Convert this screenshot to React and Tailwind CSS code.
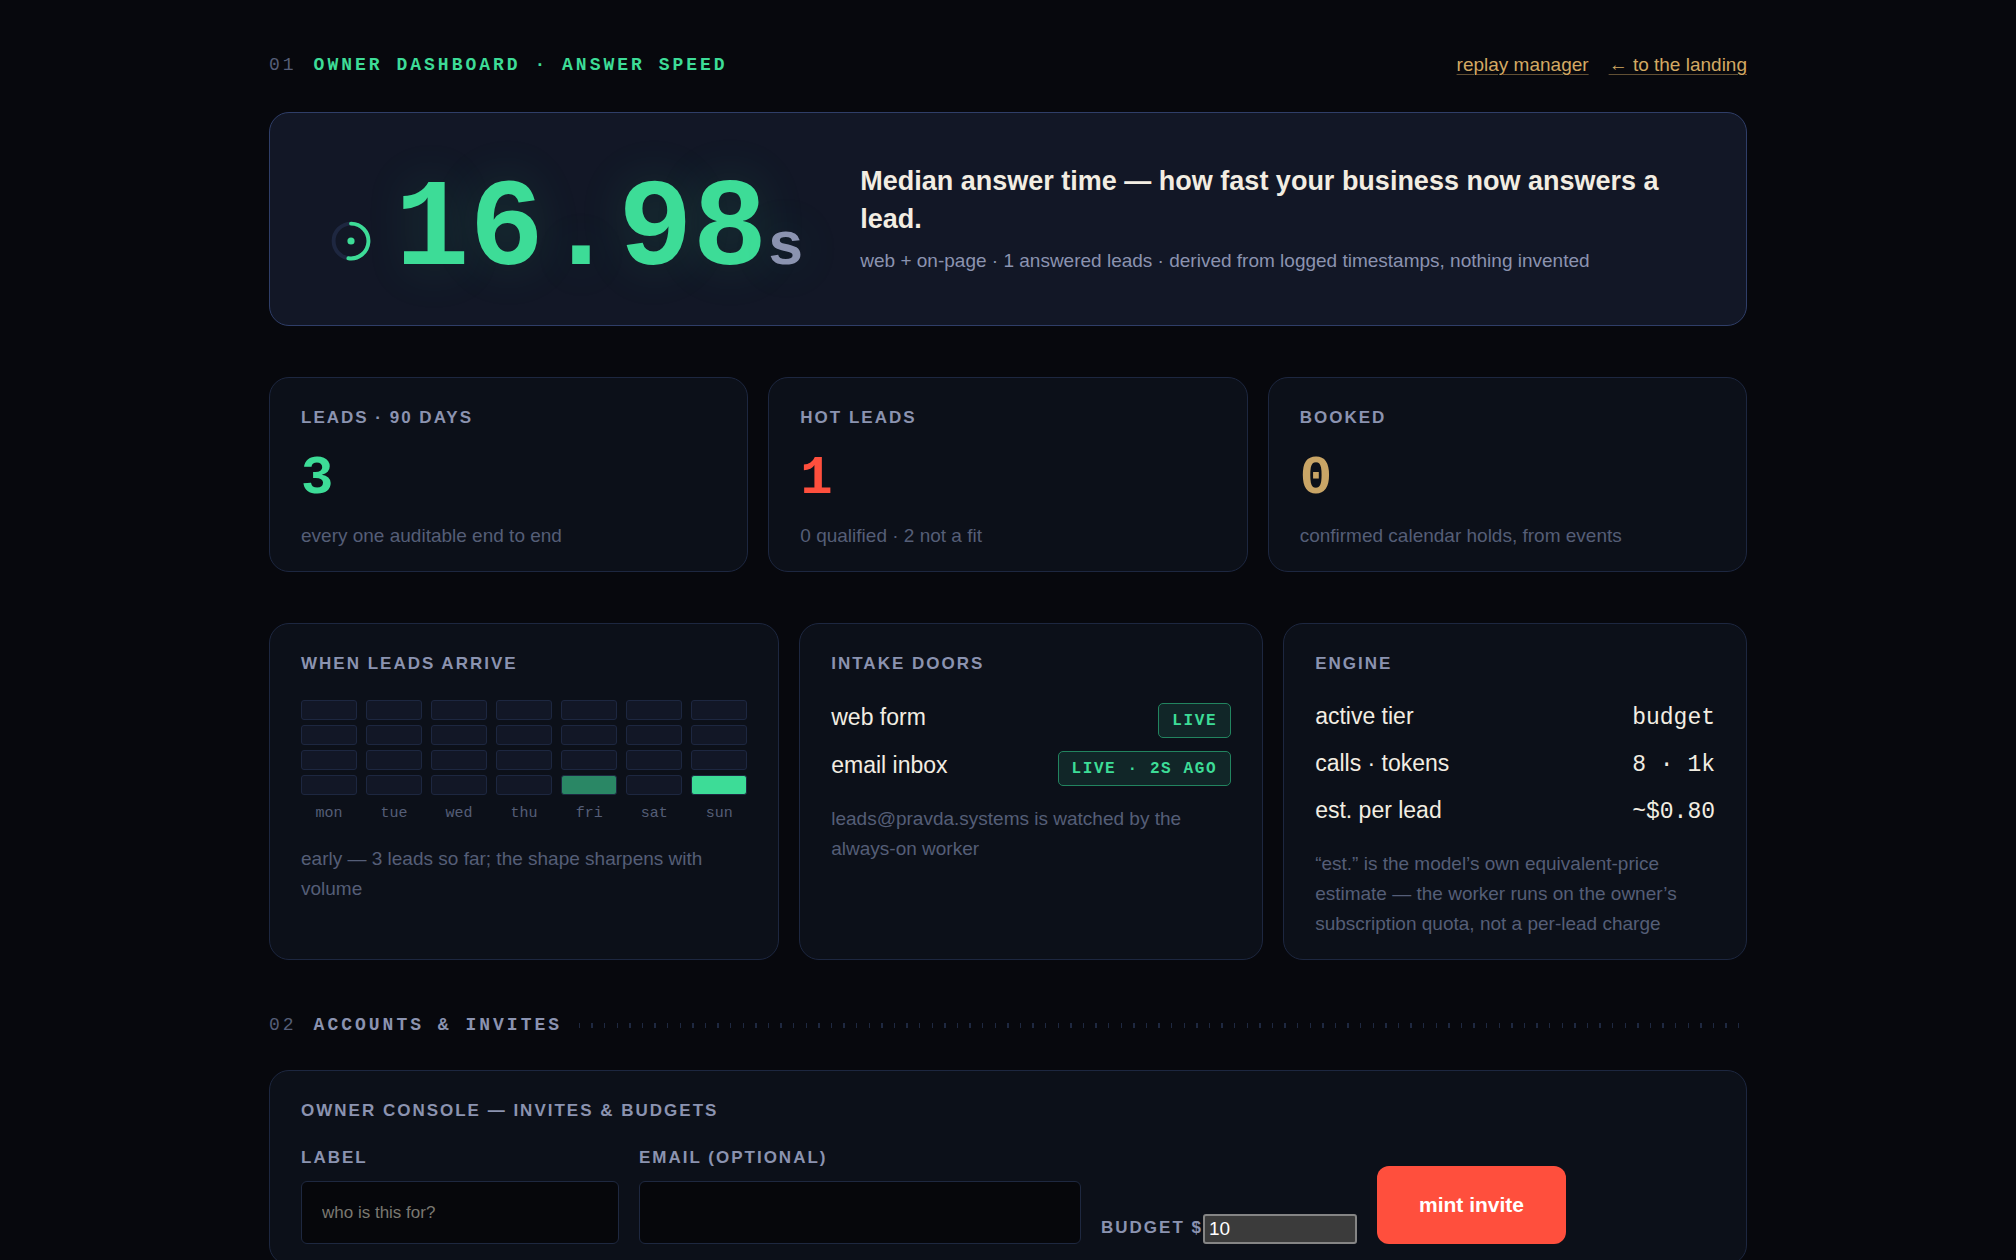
import { useState } from "react";

const days = ["mon", "tue", "wed", "thu", "fri", "sat", "sun"];

// 4 time slots x 7 days, 0 = no leads
const arrivals = [
  [0, 0, 0, 0, 0, 0, 0],
  [0, 0, 0, 0, 0, 0, 0],
  [0, 0, 0, 0, 0, 0, 0],
  [0, 0, 0, 0, 1, 0, 2],
];

const heat = ["bg-[#121726]", "bg-[#2a8765]", "bg-[#3ddc97]"];

const stats = [
  {
    label: "Leads · 90 days",
    value: "3",
    note: "every one auditable end to end",
    color: "text-[#3ddc97]",
  },
  {
    label: "Hot leads",
    value: "1",
    note: "0 qualified · 2 not a fit",
    color: "text-[#ff4f3d]",
  },
  {
    label: "Booked",
    value: "0",
    note: "confirmed calendar holds, from events",
    color: "text-[#c9a566]",
  },
];

const doors = [
  { name: "web form", status: "live" },
  { name: "email inbox", status: "live · 2s ago" },
];

const engine = [
  { name: "active tier", value: "budget" },
  { name: "calls · tokens", value: "8 · 1k" },
  { name: "est. per lead", value: "~$0.80" },
];

const mono = "font-['Liberation_Mono',monospace]";

const labelText =
  "text-[17px] leading-8 font-bold uppercase tracking-[2px] text-[#8b93b0]";

const fieldInput =
  "h-[63px] w-full rounded-[6px] border border-[#1e2840] bg-[#06070b] px-5 text-[17px] text-[#f2ede2] placeholder:text-[#7a7871] outline-none focus:border-[#2f3e68]";

function Card({ title, children }) {
  return (
    <section className="rounded-[20px] border border-[#1d2740] bg-[#0c1019] px-[31px] pt-6 pb-5">
      <h3 className={labelText}>{title}</h3>
      {children}
    </section>
  );
}

function Note({ children }) {
  return (
    <p className="mt-[15px] text-[19px] leading-[30px] text-[#555e77]">
      {children}
    </p>
  );
}

function Dial() {
  return (
    <svg
      className="size-10 shrink-0"
      viewBox="0 0 40 40"
      fill="none"
      aria-hidden="true"
    >
      <circle cx="20" cy="20" r="17.4" stroke="#1e2740" strokeWidth="3.9" />
      <path
        d="M20 2.6A17.4 17.4 0 1 1 17.4 37.2"
        stroke="#3ddc97"
        strokeWidth="3.9"
        strokeLinecap="round"
      />
      <circle cx="20" cy="20" r="3.6" fill="#3ddc97" />
    </svg>
  );
}

function App() {
  const [label, setLabel] = useState("");
  const [email, setEmail] = useState("");
  const [budget, setBudget] = useState("10");

  return (
    <div className="min-h-screen bg-[#07080d] px-6 pt-[50px] pb-16 font-['Liberation_Sans',Arial,sans-serif] text-[23px] text-[#f2ede2]">
      <main className="mx-auto w-full max-w-[1478px]">
        {/* HEADER */}
        <header className="flex items-center justify-between">
          <h1
            className={`${mono} flex gap-[17px] text-[18px] leading-[30px] font-bold uppercase tracking-[3px] text-[#3ddc97]`}
          >
            <span className="font-normal text-[#555e77]">01</span>
            Owner dashboard · answer speed
          </h1>
          <nav className="flex gap-5 text-[19px] leading-[30px] text-[#d3a963]">
            <a
              href="#replay"
              className="underline decoration-[#d3a963]/45 decoration-1 underline-offset-3"
            >
              replay manager
            </a>
            <a
              href="#landing"
              className="underline decoration-[#d3a963]/45 decoration-1 underline-offset-3"
            >
              ← to the landing
            </a>
          </nav>
        </header>

        {/* HERO */}
        <section className="mt-8 flex items-center gap-14 rounded-[20px] border border-[#2f3e68] bg-[#121726] px-[61px] py-8">
          <div className="flex shrink-0 items-end gap-6 pt-6">
            <div className="pb-8">
              <Dial />
            </div>
            <p
              className={`${mono} text-[124px] leading-none font-bold whitespace-nowrap text-[#3ddc97] [text-shadow:0_0_50px_rgba(61,220,151,0.16)]`}
            >
              16.98
              <span className="text-[62px] text-[#8b93b0]">s</span>
            </p>
          </div>
          <div>
            <h2 className="text-[27px] leading-[38px] font-bold">
              Median answer time — how fast your business now answers a lead.
            </h2>
            <p className="mt-2 text-[19px] leading-[30px] text-[#8b93b0]">
              web + on-page · 1 answered leads · derived from logged timestamps,
              nothing invented
            </p>
          </div>
        </section>

        {/* STATS */}
        <div className="mt-[51px] grid grid-cols-3 gap-5">
          {stats.map((s) => (
            <Card key={s.label} title={s.label}>
              <p
                className={`${mono} ${s.color} mt-[18px] text-[54px] leading-none font-bold`}
              >
                {s.value}
              </p>
              <Note>{s.note}</Note>
            </Card>
          ))}
        </div>

        {/* ARRIVALS, DOORS, ENGINE */}
        <div className="mt-[51px] grid grid-cols-[1.1fr_1fr_1fr] gap-5">
          <Card title="When leads arrive">
            <div className="mt-5 mb-5">
              <div className="grid grid-cols-7 gap-x-[9px] gap-y-[5px]">
                {arrivals.flat().map((n, i) => (
                  <div
                    key={i}
                    className={`h-5 rounded-[3px] border border-[#1d2740] ${heat[n]}`}
                  />
                ))}
              </div>
              <div
                className={`${mono} mt-[9px] grid grid-cols-7 gap-x-[9px] text-center text-[15px] leading-5 text-[#555e77]`}
              >
                {days.map((d) => (
                  <span key={d}>{d}</span>
                ))}
              </div>
            </div>
            <Note>
              early — 3 leads so far; the shape sharpens with volume
            </Note>
          </Card>

          <Card title="Intake doors">
            <ul className="mt-[13px]">
              {doors.map((d) => (
                <li
                  key={d.name}
                  className="flex h-12 items-baseline justify-between leading-[48px]"
                >
                  <span>{d.name}</span>
                  <span
                    className={`${mono} rounded-[5px] border border-[#22845f] bg-[#112628] px-[13px] pt-0.5 text-[16px] leading-[31px] font-bold uppercase tracking-widest text-[#3ddc97]`}
                  >
                    {d.status}
                  </span>
                </li>
              ))}
            </ul>
            <Note>
              leads@pravda.systems is watched by the always-on worker
            </Note>
          </Card>

          <Card title="Engine">
            <dl className="mt-[13px]">
              {engine.map((e) => (
                <div
                  key={e.name}
                  className="flex h-[47px] items-baseline justify-between leading-[47px]"
                >
                  <dt>{e.name}</dt>
                  <dd className={mono}>{e.value}</dd>
                </div>
              ))}
            </dl>
            <Note>
              “est.” is the model’s own equivalent-price estimate — the worker
              runs on the owner’s subscription quota, not a per-lead charge
            </Note>
          </Card>
        </div>

        {/* ACCOUNTS */}
        <div className="mt-[50px] mb-[30px] flex items-center gap-[17px]">
          <h2
            className={`${mono} flex gap-[17px] text-[18px] leading-[30px] font-bold uppercase tracking-[3px] text-[#8b93b0]`}
          >
            <span className="font-normal text-[#555e77]">02</span>
            Accounts &amp; invites
          </h2>
          <div className="h-[5px] flex-1 bg-[repeating-linear-gradient(to_right,#1e2840_0_1px,transparent_1px_12px,#1e2840_12px_14px,transparent_14px_25px,#1e2840_25px_26px,transparent_26px_38px,#1e2840_38px_39px,transparent_39px_50px,#1e2840_50px_52px,transparent_52px_63px)]" />
        </div>

        <Card title="Owner console — invites & budgets">
          <form
            className="mt-[15px] flex items-end gap-5"
            onSubmit={(e) => e.preventDefault()}
          >
            <div className="w-[318px]">
              <label htmlFor="label" className={`${labelText} block`}>
                Label
              </label>
              <input
                id="label"
                type="text"
                placeholder="who is this for?"
                value={label}
                onChange={(e) => setLabel(e.target.value)}
                className={`${fieldInput} mt-[7px]`}
              />
            </div>
            <div className="w-[442px]">
              <label htmlFor="email" className={`${labelText} block`}>
                Email (optional)
              </label>
              <input
                id="email"
                type="email"
                value={email}
                onChange={(e) => setEmail(e.target.value)}
                className={`${fieldInput} mt-[7px]`}
              />
            </div>
            <div className="flex items-end">
              <label htmlFor="budget" className={labelText}>
                Budget $
              </label>
              <input
                id="budget"
                type="text"
                inputMode="numeric"
                value={budget}
                onChange={(e) => setBudget(e.target.value)}
                className="h-[30px] w-[154px] rounded-[3px] border-2 border-[#858585] bg-[#3b3b3b] px-1 text-[19px] text-white"
              />
            </div>
            <button
              type="submit"
              className="h-[78px] rounded-[12px] bg-[#ff4f3d] px-[42px] text-[21px] font-bold text-white"
            >
              mint invite
            </button>
          </form>
        </Card>
      </main>
    </div>
  );
}

export default App;
